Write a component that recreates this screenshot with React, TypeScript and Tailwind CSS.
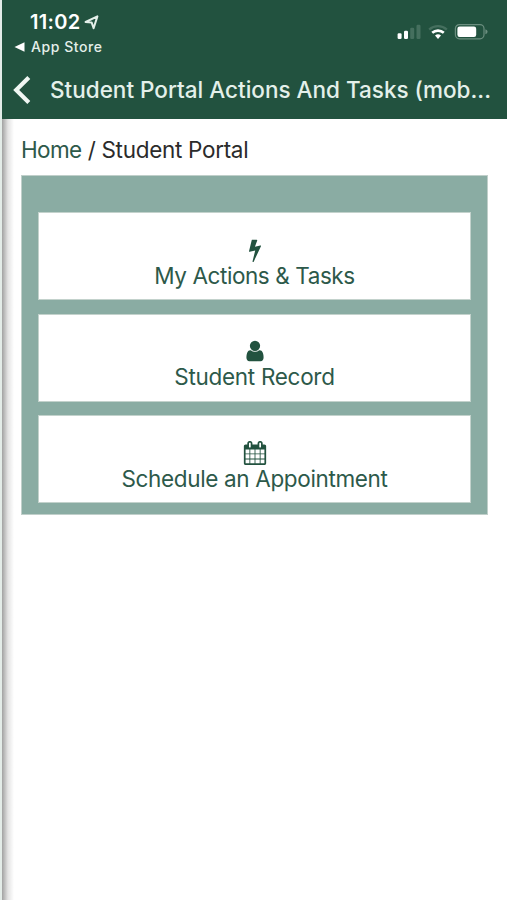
import type { ReactNode } from "react";

interface PortalTile {
  label: string;
  icon: ReactNode;
  tracking: string;
}

interface GlyphProps {
  d: string;
}

const BOLT =
  "M1333 566q18 20 7 44l-540 1157q-13 25-42 25-4 0-14-2-17-5-25.5-19t-4.5-30l197-808-406 101q-4 1-12 1-18 0-31-11-18-15-13-39l201-825q4-14 16-23t28-9h328q19 0 32 12.5t13 29.5q0 8-5 18l-171 463 396-98q8-2 12-2 19 0 34 15z";

const USER =
  "M1536 1399q0 109-62.5 187t-150.5 78h-854q-88 0-150.5-78t-62.5-187q0-85 8.5-160.5t31.5-152 58.5-131 94-89 134.5-34.5q131 128 313 128t313-128q76 0 134.5 34.5t94 89 58.5 131 31.5 152 8.5 160.5zm-256-887q0 159-112.5 271.5t-271.5 112.5-271.5-112.5-112.5-271.5 112.5-271.5 271.5-112.5 271.5 112.5 112.5 271.5z";

const CALENDAR =
  "M192 1664h288v-288h-288v288zm352 0h320v-288h-320v288zm-352-352h288v-320h-288v320zm352 0h320v-320h-320v320zm-352-384h288v-288h-288v288zm736 736h320v-288h-320v288zm-384-736h320v-288h-320v288zm768 736h288v-288h-288v288zm-384-352h320v-320h-320v320zm-352-864v-288q0-13-9.5-22.5t-22.5-9.5h-64q-13 0-22.5 9.5t-9.5 22.5v288q0 13 9.5 22.5t22.5 9.5h64q13 0 22.5-9.5t9.5-22.5zm736 864h288v-320h-288v320zm-384-384h320v-288h-320v288zm384 0h288v-288h-288v288zm32-480v-288q0-13-9.5-22.5t-22.5-9.5h-64q-13 0-22.5 9.5t-9.5 22.5v288q0 13 9.5 22.5t22.5 9.5h64q13 0 22.5-9.5t9.5-22.5zm384-64v1280q0 52-38 90t-90 38h-1408q-52 0-90-38t-38-90v-1280q0-52 38-90t90-38h128v-96q0-66 47-113t113-47h64q66 0 113 47t47 113v96h384v-96q0-66 47-113t113-47h64q66 0 113 47t47 113v96h128q52 0 90 38t38 90z";

function Glyph({ d }: GlyphProps) {
  return (
    <svg className="h-6 w-6 text-[#22523f]" viewBox="0 0 1792 1792" fill="currentColor">
      <path d={d} />
    </svg>
  );
}

const tiles: PortalTile[] = [
  { label: "My Actions & Tasks", icon: <Glyph d={BOLT} />, tracking: "tracking-[-0.42px]" },
  { label: "Student Record", icon: <Glyph d={USER} />, tracking: "tracking-[-0.3px]" },
  { label: "Schedule an Appointment", icon: <Glyph d={CALENDAR} />, tracking: "tracking-[-0.35px]" },
];

function StatusIcons() {
  return (
    <svg className="mt-[22px] h-5 w-[92px]" viewBox="0 0 92 20" fill="none">
      {/* signal: two of four bars */}
      <rect x="0.6" y="11.2" width="4" height="5.8" rx="1.2" fill="#fff" />
      <rect x="7" y="8.7" width="4" height="8.3" rx="1.2" fill="#fff" />
      <rect x="13.2" y="5.7" width="4" height="11.3" rx="1.2" fill="#456f5e" />
      <rect x="19.5" y="2.7" width="4" height="14.3" rx="1.2" fill="#456f5e" />
      {/* wifi */}
      <path d="M32.2 7.6a13 13 0 0 1 17.6 0" stroke="#456f5e" strokeWidth="2.4" />
      <path d="M35.2 10.8a8.7 8.7 0 0 1 11.6 0" stroke="#fff" strokeWidth="2.6" />
      <path d="M38 13.6a4.6 4.6 0 0 1 6 0L41 17z" fill="#fff" />
      {/* battery */}
      <rect x="58.4" y="2.6" width="28.6" height="14.2" rx="4" stroke="#6b8e7f" strokeWidth="1.2" />
      <rect x="60.4" y="4.5" width="18.8" height="10.4" rx="2.2" fill="#fff" />
      <path d="M88.4 7.3q2.2.8 2.2 2.5t-2.2 2.5z" fill="#6b8e7f" />
    </svg>
  );
}

function Header() {
  return (
    <header className="h-[119px] bg-[#22523f] text-white">
      <div className="flex h-[60px] justify-between pr-[18px] pl-3">
        <div>
          <div className="flex items-center gap-1 pt-[10px] pl-4">
            <span className="text-[20px] leading-6 font-semibold tracking-[0.3px]">11:02</span>
            <svg className="h-[15px] w-[15px]" viewBox="0 0 15 15" fill="none">
              <path
                d="M1.6 7 13.4 1.4 9.6 13.2 7.6 7.4z"
                stroke="#e4efe9"
                strokeWidth="2"
                strokeLinejoin="round"
              />
            </svg>
          </div>
          <div className="flex items-center gap-[6px] pt-1">
            <svg className="h-[10px] w-[11px]" viewBox="0 0 11 10" fill="#fff">
              <path d="M0.5 5 10.5 0.3v9.4z" />
            </svg>
            <span className="text-[14px] leading-[18px] font-medium tracking-[0.55px] text-[#e4efe9]">
              App Store
            </span>
          </div>
        </div>
        <StatusIcons />
      </div>
      <div className="flex h-[59px] items-center gap-[19px] pl-[11px]">
        <svg className="h-[30px] w-[18px]" viewBox="0 0 18 30" fill="none">
          <path d="M15.8 2.6 3.2 15 15.8 27.4" stroke="#f0f7f3" strokeWidth="4.2" />
        </svg>
        <h1 className="text-[22.5px] leading-7 font-medium whitespace-nowrap text-[#e4f0ea]">
          Student Portal Actions And Tasks (mob...
        </h1>
      </div>
    </header>
  );
}

function Tile({ label, icon, tracking }: PortalTile) {
  return (
    <button className="flex h-[88px] w-full flex-col items-center border border-[#c3d2cc] bg-white pt-[24.5px]">
      {icon}
      <span className={`mt-px text-[22.5px] leading-[26px] whitespace-nowrap text-[#2d594a] ${tracking}`}>
        {label}
      </span>
    </button>
  );
}

export default function App() {
  return (
    <div className="flex h-[900px] w-[507px] overflow-hidden bg-white font-['Inter',sans-serif]">
      <div className="w-[2px] bg-[#e3ece8]" />
      <div className="flex-1">
        <Header />
        {/* page edge shadow runs down the left of the content */}
        <main className="flex h-[781px]">
          <div className="w-[12px] bg-linear-to-r from-[#a2a2a2] via-[#e4e4e4] to-white" />
          <div className="w-[474px] pl-[7px]">
            <nav className="pt-[17px] text-[22.5px] leading-7 tracking-[-0.3px] whitespace-nowrap text-[#2b2b2b]">
              <a className="tracking-[-0.6px] text-[#2d594a]">Home</a>
              <span className="px-[6px]">/</span>
              <span>Student Portal</span>
            </nav>
            <section className="mt-[11px] flex h-[340px] flex-col gap-[13.5px] border border-[#c0cfca] bg-[#8aaca3] px-4 pt-9">
              {tiles.map((tile) => (
                <Tile key={tile.label} {...tile} />
              ))}
            </section>
          </div>
        </main>
      </div>
    </div>
  );
}
